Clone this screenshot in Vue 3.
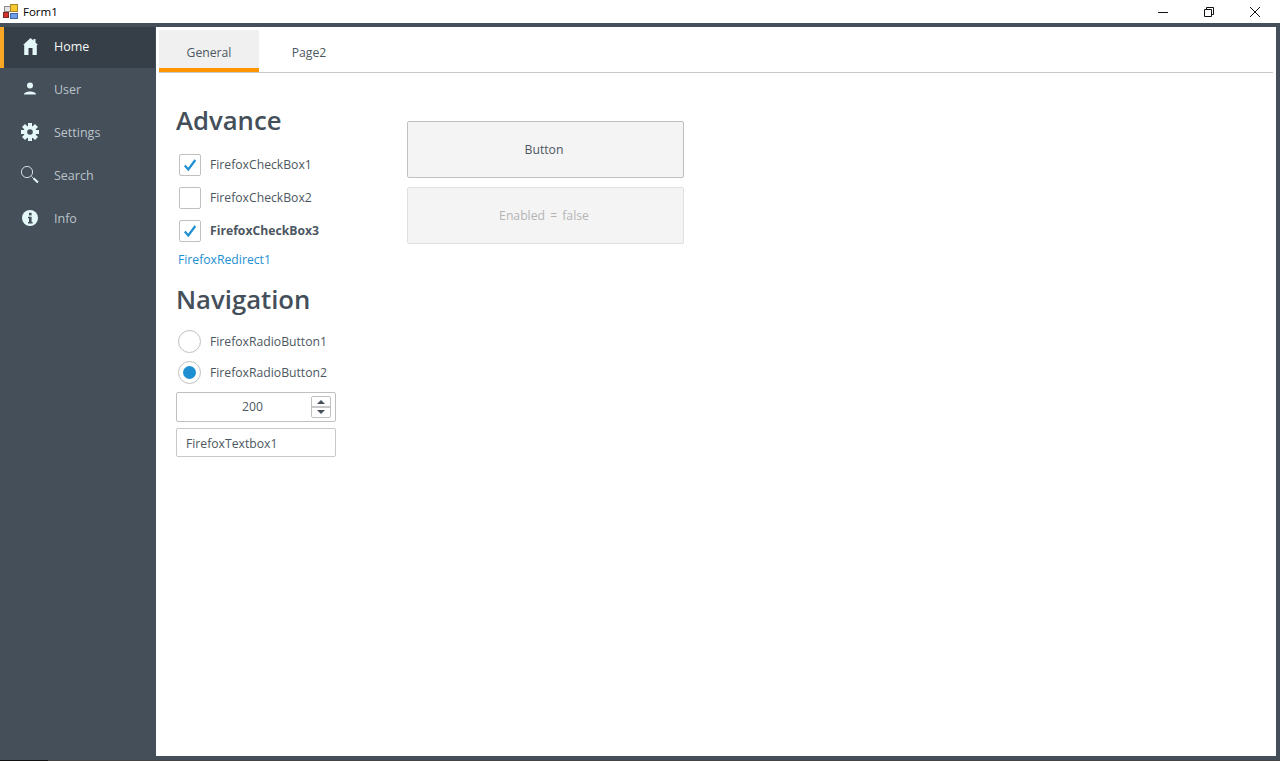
<script setup>
const nav = [
  { label: 'Home', icon: 'home', active: true },
  { label: 'User', icon: 'user' },
  { label: 'Settings', icon: 'gear' },
  { label: 'Search', icon: 'search' },
  { label: 'Info', icon: 'info' },
]
const checks = [
  { label: 'FirefoxCheckBox1', checked: true },
  { label: 'FirefoxCheckBox2', checked: false },
  { label: 'FirefoxCheckBox3', checked: true, bold: true },
]
const radios = [
  { label: 'FirefoxRadioButton1', on: false },
  { label: 'FirefoxRadioButton2', on: true },
]
const gearTeeth = [0, 45, 90, 135, 180, 225, 270, 315]
</script>

<template>
  <div class="window">
    <header class="titlebar">
      <svg class="appicon" width="16" height="16" viewBox="0 0 16 16">
        <rect x="1.500" y="2.500" width="6" height="5" fill="#e4e4e4" stroke="#8a8a8a" />
        <rect x="7.500" y="0.500" width="7" height="7" fill="#f6c92e" stroke="#a8842a" />
        <rect x="0.500" y="8.500" width="5" height="5" fill="#d8302a" stroke="#7a2a2a" />
        <rect x="7.500" y="9.500" width="7" height="5" fill="#6f9fe8" stroke="#4468a0" />
      </svg>
      <span class="title">Form1</span>
      <div class="controls">
        <svg width="12" height="12" viewBox="0 0 12 12"><path d="M1 6.500h10" stroke="#111" fill="none" /></svg>
        <svg width="12" height="12" viewBox="0 0 12 12"><path d="M1.500 3.500h7v7h-7zM3.500 3.500v-2h7v7h-2" stroke="#111" fill="none" /></svg>
        <svg width="12" height="12" viewBox="0 0 12 12"><path d="M1 1l10 10M11 1L1 11" stroke="#111" fill="none" /></svg>
      </div>
    </header>

    <div class="frame">
      <aside class="sidebar">
        <div v-for="item in nav" :key="item.label" class="navitem" :class="{ active: item.active }">
          <span class="navicon">
            <svg v-if="item.icon === 'home'" width="15" height="17" viewBox="0 0 15 17">
              <path d="M7.500 0 L10.500 2.500 V1 H12.500 V4.500 L15 7 H13.800 V17 H9.500 V10 H5.500 V17 H1.200 V7 H0 Z" fill="#e4f7f9" />
            </svg>
            <svg v-else-if="item.icon === 'user'" width="14" height="14" viewBox="0 0 14 14">
              <circle cx="7" cy="3.500" r="3" fill="#e4f7f9" />
              <path d="M1 12.500 C1 8.500 13 8.500 13 12.500 Z" fill="#e4f7f9" />
            </svg>
            <svg v-else-if="item.icon === 'gear'" width="18" height="18" viewBox="0 0 18 18">
              <g fill="#e4f7f9">
                <rect v-for="a in gearTeeth" :key="a" x="7" y="0" width="4" height="18" :transform="`rotate(${a} 9 9)`" />
                <circle cx="9" cy="9" r="6.300" />
              </g>
              <circle cx="9" cy="9" r="2.800" fill="#444f5a" />
            </svg>
            <svg v-else-if="item.icon === 'search'" width="18" height="18" viewBox="0 0 18 18">
              <circle cx="6" cy="6" r="5.600" fill="none" stroke="#cfdde0" stroke-width="1" />
              <path d="M10.500 10.500 L12.500 12.300" stroke="#cfdde0" stroke-width="1" />
              <path d="M12.500 12.300 L17 16.500" stroke="#e4f7f9" stroke-width="2" />
            </svg>
            <svg v-else width="16" height="16" viewBox="0 0 16 16">
              <circle cx="8" cy="8" r="8" fill="#e4f7f9" />
              <rect x="7" y="2.800" width="2.600" height="2.600" fill="#444f5a" />
              <path d="M6 6.800h3.600v5.200h1v1.500H6V12h1V8.300H6z" fill="#444f5a" />
            </svg>
          </span>
          <span class="navlabel">{{ item.label }}</span>
        </div>
      </aside>

      <main class="content">
        <nav class="tabs">
          <div class="tab selected">General</div>
          <div class="tab">Page2</div>
        </nav>
        <section class="page">
          <div class="col-left">
            <h2 class="heading">Advance</h2>
            <label v-for="c in checks" :key="c.label" class="check" :class="{ bold: c.bold }">
              <span class="box">
                <svg v-if="c.checked" width="14" height="14" viewBox="0 0 14 14">
                  <path d="M1.800 7.500 L5.300 11.500 L12.300 2" fill="none" stroke="#1e90d2" stroke-width="2.200" />
                </svg>
              </span>
              {{ c.label }}
            </label>
            <a class="redirect">FirefoxRedirect1</a>
            <h2 class="heading second">Navigation</h2>
            <label v-for="r in radios" :key="r.label" class="radio">
              <span class="ring"><span v-if="r.on" class="dot"></span></span>
              {{ r.label }}
            </label>
            <div class="numeric">
              <span class="numvalue">200</span>
              <span class="spinner">
                <span class="arrow up"></span>
                <span class="arrow down"></span>
              </span>
            </div>
            <div class="textbox">FirefoxTextbox1</div>
          </div>
          <div class="col-right">
            <div class="btn">Button</div>
            <div class="btn disabled">Enabled = false</div>
          </div>
        </section>
      </main>
    </div>
    <div class="baseline"></div>
  </div>
</template>

<style>
html, body { margin: 0; background: #444f5a; }
</style>

<style scoped>
.window {
  width: 1280px;
  height: 761px;
  display: flex;
  flex-direction: column;
  overflow: hidden;
  font-family: "Open Sans", "Noto Sans", sans-serif;
  font-size: 12.200px;
  color: #4c5761;
}
.titlebar {
  height: 23px;
  flex: none;
  background: #fff;
  display: flex;
  align-items: center;
  padding-left: 3px;
}
.appicon { flex: none; }
.title {
  margin-left: 4px;
  font-size: 11.500px;
  color: #000;
}
.controls {
  margin-left: auto;
  display: flex;
  gap: 34px;
  padding-right: 19px;
}
.frame {
  flex: 1;
  min-height: 0;
  display: flex;
  background: #444f5a;
  padding: 4px 4px 4px 0;
}
.sidebar {
  width: 156px;
  flex: none;
}
.navitem {
  height: 43px;
  display: flex;
  align-items: center;
  padding: 0 0 1px 21px;
  box-sizing: border-box;
  color: #bcc3c9;
  font-size: 12.500px;
}
.navitem.active {
  height: 41px;
  width: 155px;
  padding: 0 0 2px 17px;
  background: #363e47;
  border-left: 4px solid #f9a825;
  color: #f4f6f7;
}
.navicon {
  width: 18px;
  height: 18px;
  display: flex;
  align-items: center;
  justify-content: center;
  margin-right: 15px;
}
.content {
  flex: 1;
  min-width: 0;
  background: #fff;
  padding: 3px 3px 0;
  display: flex;
  flex-direction: column;
}
.tabs {
  display: flex;
  height: 43px;
  box-sizing: border-box;
  border-bottom: 1px solid #c8c8c8;
  flex: none;
}
.tab {
  width: 100px;
  height: 42px;
  box-sizing: border-box;
  display: flex;
  align-items: center;
  justify-content: center;
  padding-top: 3px;
}
.tab.selected {
  background: #f0f0f0;
  box-shadow: inset 0 -4px 0 #ff9500;
}
.page {
  display: flex;
  padding: 30px 0 0 17px;
}
.col-left {
  width: 231px;
  display: flex;
  flex-direction: column;
  align-items: flex-start;
}
.heading {
  margin: 0 0 9px;
  font-size: 25.700px;
  line-height: 36px;
  font-weight: 600;
  color: #444f5a;
  height: 36px;
}
.heading.second {
  margin: 10px 0 8px;
}
.check {
  height: 33px;
  display: flex;
  align-items: center;
  margin-left: 3px;
}
.check.bold { font-weight: 700; }
.box {
  width: 20px;
  height: 20px;
  border: 1px solid #c0c0c0;
  border-radius: 2px;
  margin-right: 9px;
  display: flex;
  align-items: center;
  justify-content: center;
  flex: none;
}
.redirect {
  color: #1e90d2;
  margin-left: 2px;
  line-height: 25px;
  height: 25px;
}
.radio {
  height: 31px;
  display: flex;
  align-items: center;
  margin-left: 2px;
}
.ring {
  width: 21px;
  height: 21px;
  border: 1px solid #c0c0c0;
  border-radius: 50%;
  margin-right: 9px;
  display: flex;
  align-items: center;
  justify-content: center;
  flex: none;
}
.dot {
  width: 13px;
  height: 13px;
  border-radius: 50%;
  background: #1e90d2;
}
.numeric {
  width: 160px;
  height: 30px;
  box-sizing: border-box;
  border: 1px solid #c0c0c0;
  border-radius: 2px;
  display: flex;
  align-items: center;
  position: relative;
  margin-top: 4px;
}
.numvalue {
  flex: 1;
  text-align: center;
  padding: 0 7px 2px 0;
}
.spinner {
  position: absolute;
  right: 4px;
  top: 3px;
  width: 18px;
  height: 20px;
  border: 1px solid #c0c0c0;
  border-radius: 2px;
  display: flex;
  flex-direction: column;
  align-items: center;
  justify-content: space-around;
  background: linear-gradient(#fff 47%, #c8c8c8 47%, #c8c8c8 53%, #fff 53%);
}
.arrow {
  width: 0;
  height: 0;
  border-left: 4px solid transparent;
  border-right: 4px solid transparent;
}
.arrow.up { border-bottom: 4px solid #444f5a; }
.arrow.down { border-top: 4px solid #444f5a; }
.textbox {
  width: 160px;
  height: 29px;
  box-sizing: border-box;
  border: 1px solid #c8c8c8;
  border-radius: 2px;
  margin-top: 6px;
  padding-left: 9px;
  line-height: 29px;
}
.col-right {
  padding-top: 18px;
  display: flex;
  flex-direction: column;
  gap: 9px;
}
.btn {
  width: 277px;
  height: 57px;
  box-sizing: border-box;
  border: 1px solid #c0c0c0;
  border-radius: 2px;
  background: #f4f4f4;
  display: flex;
  align-items: center;
  justify-content: center;
  padding-right: 3px;
}
.btn.disabled {
  border-color: #e0e0e0;
  color: #b4b4b4;
  word-spacing: 2px;
}
.baseline {
  height: 1px;
  flex: none;
  background: linear-gradient(90deg, #111 48px, #444 48px);
}
</style>
